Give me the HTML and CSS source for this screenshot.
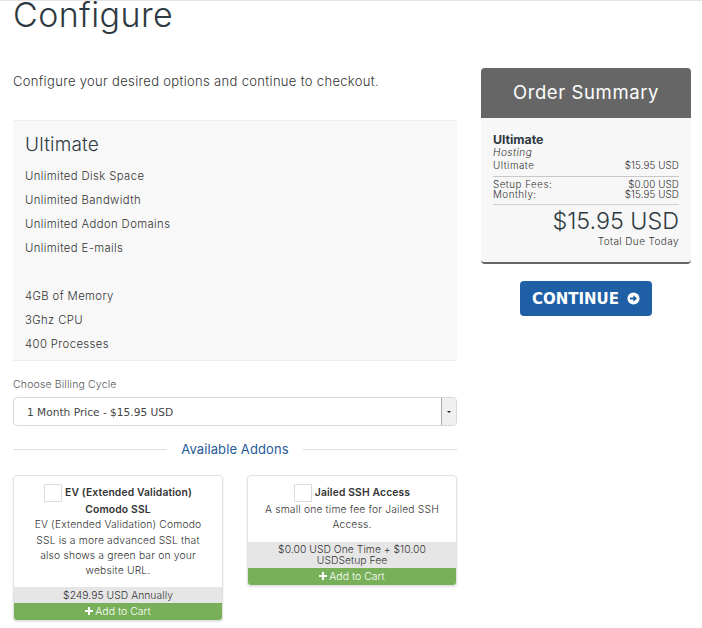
FILE: index.html
```html
<!DOCTYPE html>
<html lang="en">
<head>
<meta charset="utf-8">
<title>Configure</title>
<link rel="stylesheet" href="styles.css">
</head>
<body>
<div class="page">
  <h1 class="title">Configure</h1>
  <div class="columns">
    <main class="main">
      <p class="intro">Configure your desired options and continue to checkout.</p>
      <section class="product">
        <h2 class="product-name">Ultimate</h2>
        <p class="feature">Unlimited Disk Space</p>
        <p class="feature">Unlimited Bandwidth</p>
        <p class="feature">Unlimited Addon Domains</p>
        <p class="feature">Unlimited E-mails</p>
        <p class="feature">&nbsp;</p>
        <p class="feature">4GB of Memory</p>
        <p class="feature">3Ghz CPU</p>
        <p class="feature">400 Processes</p>
      </section>
      <label class="field-label">Choose Billing Cycle</label>
      <div class="select">
        <span class="select-value">1 Month Price - $15.95 USD</span>
        <span class="select-arrow"><i class="caret"></i></span>
      </div>
      <div class="divider"><span class="divider-text">Available Addons</span></div>
      <div class="addons">
        <article class="addon">
          <div class="addon-body">
            <div class="addon-title"><span class="check"></span>EV (Extended Validation) Comodo SSL</div>
            <p class="addon-desc">EV (Extended Validation) Comodo SSL is a more advanced SSL that also shows a green bar on your website URL.</p>
          </div>
          <div class="addon-price">$249.95 USD Annually</div>
          <div class="addon-cart"><svg class="plus" viewBox="0 0 10 10"><path d="M3.7 0h2.6v3.7H10v2.6H6.3V10H3.7V6.3H0V3.7h3.7z"/></svg>Add to Cart</div>
        </article>
        <article class="addon">
          <div class="addon-body">
            <div class="addon-title"><span class="check"></span>Jailed SSH Access</div>
            <p class="addon-desc">A small one time fee for Jailed SSH Access.</p>
          </div>
          <div class="addon-price">$0.00 USD One Time + $10.00 USDSetup Fee</div>
          <div class="addon-cart"><svg class="plus" viewBox="0 0 10 10"><path d="M3.7 0h2.6v3.7H10v2.6H6.3V10H3.7V6.3H0V3.7h3.7z"/></svg>Add to Cart</div>
        </article>
      </div>
    </main>
    <aside class="side">
      <div class="summary">
        <h2 class="summary-head">Order Summary</h2>
        <div class="summary-body">
          <div class="sum-name">Ultimate</div>
          <div class="sum-group">Hosting</div>
          <div class="sum-row sum-first"><span class="sum-label">Ultimate</span><span>$15.95 USD</span></div>
          <div class="sum-fees">
            <div class="sum-row"><span class="sum-label">Setup Fees:</span><span>$0.00 USD</span></div>
            <div class="sum-row"><span class="sum-label">Monthly:</span><span>$15.95 USD</span></div>
          </div>
          <div class="sum-total">$15.95 USD</div>
          <div class="sum-due">Total Due Today</div>
        </div>
      </div>
      <div class="cta">
        <a class="continue" href="#">CONTINUE
          <svg class="arrow" viewBox="0 0 14 14"><circle cx="7" cy="7" r="6.5" fill="#fff"/><path d="M3.2 5.8h3.6V3.4L10.8 7l-4 3.6V8.2H3.2z" fill="#1f5fa6"/></svg>
        </a>
      </div>
    </aside>
  </div>
</div>
</body>
</html>
```

FILE: styles.css
```css
* { box-sizing: border-box; }
html, body { margin: 0; padding: 0; height: 628px; overflow: hidden; background: #fff; }
body { font-family: "Inter", "Liberation Sans", sans-serif; color: #333; border-top: 1px solid #e4e4e4; }
.page { padding: 0 0 0 13px; }
.title { margin: 0; height: 27px; font-size: 34px; line-height: 27px; font-weight: 300; color: #2e3a42; letter-spacing: 0.4px; }
.columns { display: grid; grid-template-columns: 444px 210px; column-gap: 24px; align-items: start; margin-top: 33px; }
.intro { margin: 12px 0 0; height: 47px; font-size: 13px; line-height: 16px; font-weight: 300; color: #333; letter-spacing: 0.33px; }
.product { background: #f8f8f8; border-top: 1px solid #eee; border-bottom: 1px solid #eee; height: 241px; padding: 13px 12px 0; }
.product-name { margin: 0 0 8px; font-size: 19px; line-height: 22px; font-weight: 300; color: #2e3a42; letter-spacing: 0.2px; }
.feature { margin: 0; height: 24px; font-size: 11.3px; line-height: 24px; font-weight: 300; color: #333; letter-spacing: 0.4px; }
.field-label { display: block; margin-top: 17px; font-size: 10.5px; line-height: 14px; font-weight: 300; color: #555; letter-spacing: 0.15px; }
.select { display: flex; justify-content: space-between; margin-top: 5px; height: 29px; border: 1px solid #d8d8d8; border-radius: 4px; background: #fff; }
.select-value { padding-left: 13px; font-family: "DejaVu Sans", sans-serif; font-size: 10.6px; line-height: 28px; color: #444; }
.select-arrow { display: flex; align-items: center; justify-content: center; width: 15px; height: 27px; background: #f0f0f0; border-left: 1px solid #aaa; border-radius: 0 3px 3px 0; }
.caret { width: 0; height: 0; border-left: 2px solid transparent; border-right: 2px solid transparent; border-top: 2px solid #222; }
.divider { display: flex; align-items: center; gap: 14px; margin-top: 15px; height: 17px; }
.divider::before, .divider::after { content: ""; flex: 1; height: 1px; background: #e0e0e0; }
.divider-text { font-size: 13px; line-height: 17px; font-weight: 400; color: #1f5a96; letter-spacing: 0.1px; }
.addons { display: grid; grid-template-columns: 210px 210px; column-gap: 24px; align-items: start; margin-top: 17px; }
.addon { border: 1px solid #e2e2e2; border-radius: 4px; overflow: hidden; background: #fff; box-shadow: 0 1px 2px rgba(0,0,0,.12); text-align: center; }
.addon-body { padding: 8px 16px 9px; }
.addon-title { font-size: 10.3px; line-height: 15.3px; font-weight: 600; color: #333; letter-spacing: 0.15px; }
.check { display: inline-block; vertical-align: middle; width: 18px; height: 18px; margin-right: 3px; border: 1px solid #dcdcd8; border-radius: 1px; background: #fff; }
.addon-desc { margin: 0; font-size: 10.3px; line-height: 15.3px; font-weight: 300; color: #333; letter-spacing: 0.17px; }
.addon-price { background: #e6e6e6; padding: 2.5px 8px 2.5px; font-size: 10.3px; line-height: 10.5px; font-weight: 300; color: #333; letter-spacing: 0.05px; }
.addon-cart { display: flex; align-items: center; justify-content: center; gap: 2px; height: 17px; background: #78b05a; color: #fff; font-size: 10.5px; font-weight: 300; }
.plus { width: 8px; height: 8px; fill: #fff; }
.side { margin-top: 7px; }
.summary { background: #f7f7f7; border-bottom: 2px solid #666; border-radius: 4px; overflow: hidden; height: 196px; }
.summary-head { margin: 0; height: 50px; background: #666; color: #fff; text-align: center; font-size: 18.5px; line-height: 49px; font-weight: 400; letter-spacing: 0.6px; }
.summary-body { padding: 16px 12px 0; font-size: 9.8px; color: #333; font-weight: 300; }
.sum-name { font-size: 12.3px; line-height: 12px; font-weight: 700; color: #2e3a42; }
.sum-group { font-size: 10px; line-height: 12px; font-style: italic; letter-spacing: 0.5px; }
.sum-row { display: flex; justify-content: space-between; line-height: 10px; letter-spacing: 0.1px; }
.sum-label { letter-spacing: 0.5px; }
.sum-first { padding: 2px 0 4px; line-height: 12px; border-bottom: 1px solid #c8c8c8; }
.sum-fees { padding: 3px 0 4px; border-bottom: 1px solid #d0d0d0; }
.sum-total { margin-top: 2px; text-align: right; font-size: 23.3px; line-height: 28px; font-weight: 300; color: #2e3a42; }
.sum-due { text-align: right; line-height: 13px; font-size: 10px; letter-spacing: 0.4px; }
.cta { display: flex; justify-content: center; margin-top: 17px; }
.continue { display: flex; align-items: center; gap: 8px; height: 35px; padding: 0 12px; background: #1f5fa6; border-radius: 4px; color: #fff; font-family: "DejaVu Sans", sans-serif; font-weight: 700; font-size: 15px; text-decoration: none; }
.arrow { width: 13px; height: 13px; }
```
